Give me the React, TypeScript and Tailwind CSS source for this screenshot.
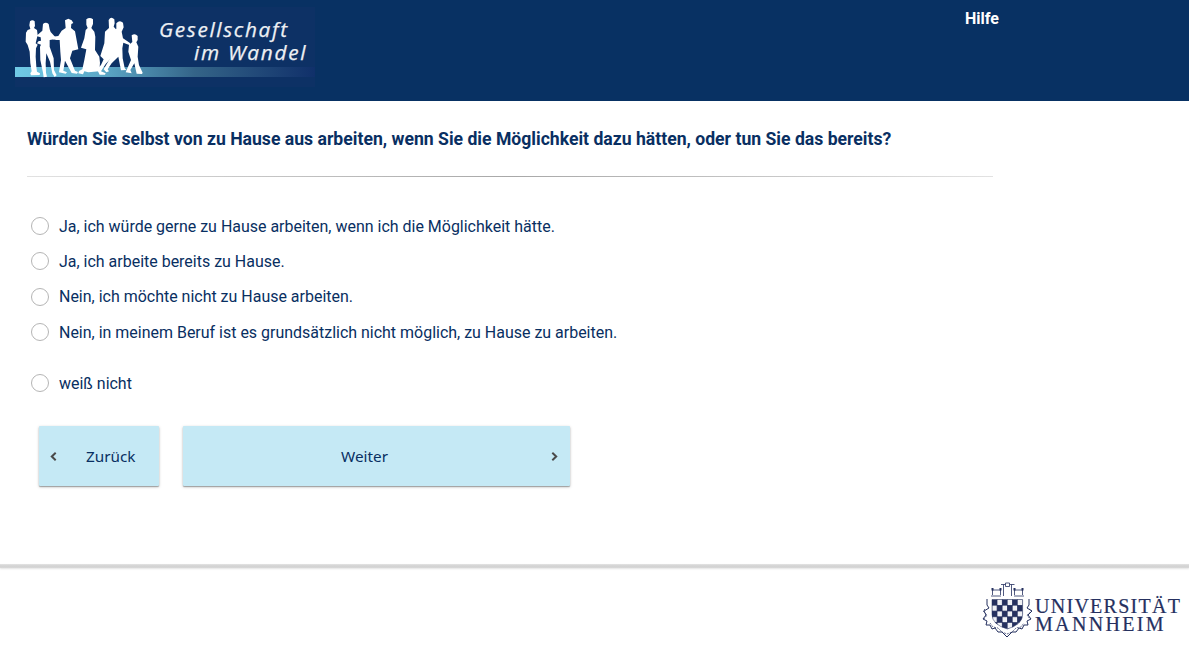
const options = [
  { label: 'Ja, ich würde gerne zu Hause arbeiten, wenn ich die Möglichkeit hätte.', gap: '', nudge: 'pt-0.5' },
  { label: 'Ja, ich arbeite bereits zu Hause.', gap: 'mt-[15px]', nudge: 'pt-0.5' },
  { label: 'Nein, ich möchte nicht zu Hause arbeiten.', gap: 'mt-4', nudge: '' },
  { label: 'Nein, in meinem Beruf ist es grundsätzlich nicht möglich, zu Hause zu arbeiten.', gap: 'mt-[15px]', nudge: 'pt-0.5' },
  { label: 'weiß nicht', gap: 'mt-[31px]', nudge: 'pt-0.5' },
];

/* Walking people in front of a fading band, with the two-line study name. */
function StudyLogo() {
  return (
    <svg width="300" height="80" viewBox="15 7 300 80" className="block" role="img" aria-label="Gesellschaft im Wandel">
      <defs>
        <linearGradient id="band" x1="0" x2="1">
          <stop offset="0" stopColor="#70cae6" />
          <stop offset="0.3" stopColor="#5ba6c6" />
          <stop offset="0.6" stopColor="#346488" />
          <stop offset="1" stopColor="#10306a" />
        </linearGradient>
      </defs>
      <rect x="15" y="7" width="300" height="80" fill="#0d3165" />
      <rect x="15" y="67" width="300" height="10" fill="url(#band)" />
      <g fill="#fff" transform="translate(15 10) scale(0.3333)">
        <path d="M45 34Q52 28 59 34L60 48L57 54L66 60L68 75L62 100L68 104L63 115L62 140L64 170L66 185L75 190L74 195L48 196L46 190L50 184L46 160L44 125L38 105L32 95L33 68L38 60L46 57L43 46Z" />
        <path d="M84 42Q92 34 101 42L104 58L107 66L120 80L118 88L104 90L104 110L116 145L117 180L125 196L119 201L112 190L105 155L94 130L92 160L93 188L96 200L86 202L84 188L76 150L75 110L78 104L66 100L70 94L78 92L77 82L64 78L82 62Z" />
        <path d="M150 31L160 26L170 31L175 39L169 42L168 54L180 64L190 118L172 122L165 145L180 182L189 186L186 191L170 189L150 152L145 182L156 187L152 191L132 187L138 150L136 125L134 90L124 90L114 88L112 80L130 78L140 62L152 54Z" />
      </g>
      <g fill="#fff" transform="translate(75 10) scale(0.3333)">
        <path d="M34 28Q44 20 54 28L54 42L49 54L58 65L61 80L60 120L73 140L75 158L73 184L40 187L28 184L24 193L10 190L12 183L22 178L28 150L34 118L18 113L28 85L32 60L38 54L34 44Z" />
        <path d="M101 30Q108 18 118 28L119 40L116 50L125 60L124 110L108 145L92 162L78 184L92 190L90 194L74 194L66 178L78 165L86 148L76 138L88 100L90 65L102 54Z" />
        <path d="M124 40Q134 28 144 38L146 52L140 65L144 85L166 100L165 106L145 98L142 115L143 145L149 174L154 180L138 181L130 140L110 160L98 178L102 184L94 187L86 178L108 140L116 100L116 65L124 56Z" />
        <path d="M170 76Q180 68 188 78L188 90L184 97L190 110L188 140L192 165L203 188L201 192L185 191L178 160L166 180L170 190L152 187L168 150L160 125L162 105L172 96Z" />
      </g>
      <g fill="#edf0f4" stroke="#edf0f4" strokeWidth="0.25" fontFamily="'Open Sans', 'Noto Sans', sans-serif" fontStyle="italic" fontSize="20.8">
        <text x="159" y="37" textLength="128" lengthAdjust="spacing">Gesellschaft</text>
        <text x="194" y="60" textLength="111.5" lengthAdjust="spacing">im Wandel</text>
      </g>
    </svg>
  );
}

function Crest() {
  const rows = [599.5, 605.3, 611.1, 616.9, 622.7];
  const columns = [992, 997.1, 1002.2, 1007.3, 1012.4, 1017.5];
  const outline = 'M992 599.5h30.6v15q0 10-15.3 14.5q-15.3-4.5-15.3-14.5z';
  return (
    <svg width="52" height="57" viewBox="981 581 52 57" className="block shrink-0" aria-hidden="true">
      <g fill="none" stroke="#25305f" strokeWidth="0.8">
        <path d="M992.5 589v6M1000.5 589v6M992 590h9M991 596h10M1003.5 596v-11.5M1011.5 584.5v11.5M1001 584.5h4.5M1010 584.5h4.5M1005.5 583h4v3.5h-4zM1014.5 589v6M1022.5 589v6M1014 590h9M1014 596h10" />
        <path d="M987 599v6l2 3l-5 3l2 4l-3 4l4 2l-1 4l4 0l2 4l3-1l3 4l4 0l5 5l5-5l4 0l3-4l3 1l2-4l4 0l-1-4l4-2l-3-4l4-4l-5-3l2-3v-6" strokeWidth="1" />
        <path d="M985 609l-2 2l4 4l-3 4M1029 609l3 2l-5 4l3 4M990 623l3 4l5 1l4 4l5 2l5-2l4-4l5-1l3-4" strokeWidth="0.7" strokeDasharray="2 1" />
      </g>
      <g fill="#25305f">
        <rect x="991.5" y="588" width="2" height="2.5" />
        <rect x="999.5" y="588" width="2" height="2.5" />
        <rect x="1013.5" y="588" width="2" height="2.5" />
        <rect x="1021.5" y="588" width="2" height="2.5" />
      </g>
      <clipPath id="shield"><path d={outline} /></clipPath>
      <g clipPath="url(#shield)">
        {rows.map((y, row) =>
          columns.map((x, col) => (
            <rect key={`${x}-${y}`} x={x} y={y} width="5.1" height="5.8" fill={(row + col) % 2 ? '#f0f1f5' : '#25305f'} stroke="#25305f" strokeWidth="0.5" />
          )),
        )}
      </g>
      <path d={outline} fill="none" stroke="#25305f" strokeWidth="0.5" />
    </svg>
  );
}

function Chevron({ right = false }: { right?: boolean }) {
  return (
    <svg width="8" height="10" viewBox="0 0 8 10" fill="none" stroke="#4a4a4a" strokeWidth="2" aria-hidden="true">
      <path d={right ? 'M1.3 1.8L5.2 5.5L1.3 9.2' : 'M5.7 1.8L1.8 5.5L5.7 9.2'} />
    </svg>
  );
}

export default function App() {
  return (
    <div className="flex h-[647px] w-full flex-col overflow-hidden bg-white font-['Roboto',sans-serif] text-[#092f62]">
      <header className="flex h-[101px] shrink-0 items-start bg-[#083163] pl-[15px] pt-[7px]">
        <StudyLogo />
        <a href="#" className="ml-[650px] text-base leading-6 font-bold text-white">Hilfe</a>
      </header>
      <main className="h-[463px] shrink-0 pl-[27px]">
        <h1 className="pt-[26px] text-[17.61px] leading-6 font-bold whitespace-nowrap">
          Würden Sie selbst von zu Hause aus arbeiten, wenn Sie die Möglichkeit dazu hätten, oder tun Sie das bereits?
        </h1>
        <div className="mt-[25px] h-px w-[966px] bg-linear-to-r from-[#e2e2e2] via-[#a8a8a8] to-[#e2e2e2]" />
        <div className="mt-[39px] pl-1" role="radiogroup">
          {options.map(({ label, gap, nudge }) => (
            <label key={label} className={`flex h-5 items-center gap-[10px] text-[15.98px] leading-5 ${gap}`}>
              <input type="radio" name="answer" className="size-[18px] shrink-0 appearance-none rounded-full border border-[#b5b5b5] bg-white" />
              <span className={nudge}>{label}</span>
            </label>
          ))}
        </div>
        <div className="mt-[33px] flex gap-6 pl-3 font-['Noto_Sans',sans-serif] text-[15.3px]">
          <button className="flex h-[60px] w-30 items-center rounded-[1px] bg-[#c5e9f5] pl-[11px] shadow-[0_1px_3px_rgba(0,0,0,0.25),0_1px_1px_rgba(0,0,0,0.25)]">
            <Chevron />
            <span className="ml-7">Zurück</span>
          </button>
          <button className="flex h-[60px] w-[387px] items-center rounded-[1px] bg-[#c5e9f5] pr-[11px] pl-[158px] shadow-[0_1px_3px_rgba(0,0,0,0.25),0_1px_1px_rgba(0,0,0,0.25)]">
            <span>Weiter</span>
            <span className="ml-auto"><Chevron right /></span>
          </button>
        </div>
      </main>
      <footer className="flex flex-1 flex-col">
        <div className="h-1 bg-linear-to-b from-[#e4e4e4] via-[#d2d2d2] to-[#d8d8d8] shadow-[0_1px_2px_#e4e4e4]" />
        <div className="flex pt-[13px] pl-[981px]">
          <Crest />
          <svg width="150" height="57" viewBox="0 0 150 57" className="block shrink-0" role="img" aria-label="Universität Mannheim">
            <g fill="#25305f" stroke="#25305f" strokeWidth="0.2" fontFamily="'Liberation Serif', serif" fontSize="20">
              <text x="2" y="31.5" textLength="145" lengthAdjust="spacing">UNIVERSITÄT</text>
              <text x="2" y="50" textLength="128.5" lengthAdjust="spacing">MANNHEIM</text>
            </g>
          </svg>
        </div>
      </footer>
    </div>
  );
}
